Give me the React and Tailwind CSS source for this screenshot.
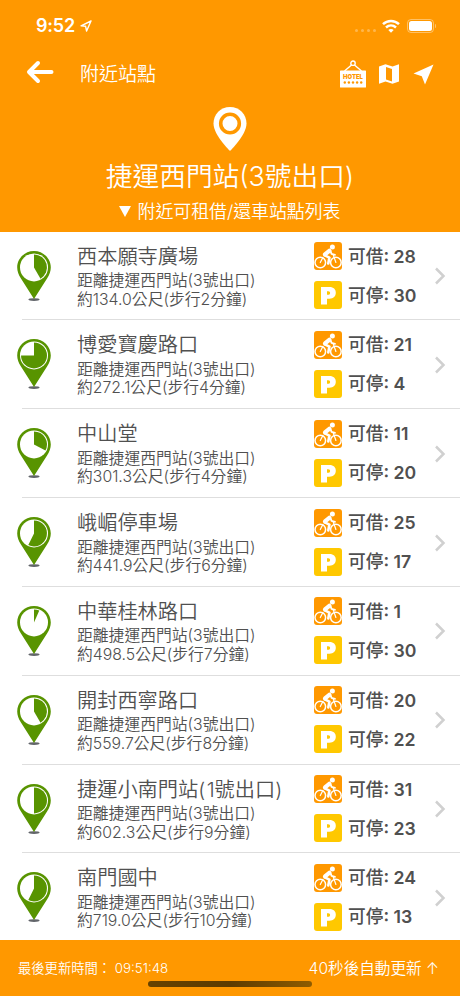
import React from "react";

const stations = [
  { name: "西本願寺廣場", distance: "134.0", minutes: 2, bikes: 28, docks: 30, angle: 150 },
  { name: "博愛寶慶路口", distance: "272.1", minutes: 4, bikes: 21, docks: 4, angle: 270 },
  { name: "中山堂", distance: "301.3", minutes: 4, bikes: 11, docks: 20, angle: 118 },
  { name: "峨嵋停車場", distance: "441.9", minutes: 6, bikes: 25, docks: 17, angle: 206 },
  { name: "中華桂林路口", distance: "498.5", minutes: 7, bikes: 1, docks: 30, angle: 24 },
  { name: "開封西寧路口", distance: "559.7", minutes: 8, bikes: 20, docks: 22, angle: 150 },
  { name: "捷運小南門站(1號出口)", distance: "602.3", minutes: 9, bikes: 31, docks: 23, angle: 180 },
  { name: "南門國中", distance: "719.0", minutes: 10, bikes: 24, docks: 13, angle: 206 },
];

// Pie slice that starts at 12 o'clock and runs clockwise
const slicePath = (angle, cx, cy, r) => {
  const rad = (angle * Math.PI) / 180;
  const x = cx + r * Math.sin(rad);
  const y = cy - r * Math.cos(rad);
  return `M${cx} ${cy}V${cy - r}A${r} ${r} 0 ${angle > 180 ? 1 : 0} 1 ${x} ${y}Z`;
};

function StationPin({ angle }) {
  return (
    <svg className="block h-[52px] w-[36px]" viewBox="0 0 36 52">
      <ellipse cx="18" cy="49.6" rx="5.6" ry="1.3" fill="#62656a" />
      <path
        d="M18 1C8.700 1 1.200 8.400 1.200 17.600C1.200 21.500 2.600 25 4.800 28.200L18 49L31.200 28.200C33.400 25 34.800 21.500 34.800 17.600C34.800 8.400 27.300 1 18 1Z"
        fill="#589400"
      />
      <circle cx="18" cy="17.400" r="14" fill="#fff" />
      <path d={slicePath(angle, 18, 17.4, 13)} fill="#589400" />
    </svg>
  );
}

function BikeIcon() {
  return (
    <svg className="block size-7" viewBox="0 0 28 28">
      <rect width="28" height="28" rx="3" fill="#ff9800" />
      <g fill="none" stroke="#fff" strokeWidth="1.500">
        <circle cx="6.300" cy="20.500" r="5.300" />
        <circle cx="21.900" cy="20.500" r="5.300" />
      </g>
      <circle cx="18.400" cy="4.900" r="2.500" fill="#fff" />
      <g fill="none" stroke="#fff" strokeLinecap="round" strokeLinejoin="round">
        <path d="M15.300 8.800L11 12.300" strokeWidth="4.200" />
        <path d="M16.300 8.500L17.500 11.800L21 12.800" strokeWidth="1.900" />
        <path d="M10.800 13.300L15.400 15.600L14.300 21.500" strokeWidth="2.600" />
        <path d="M6.300 20.500L9 15.300M19.300 13L21.900 20.500" strokeWidth="1.200" />
      </g>
    </svg>
  );
}

function ParkingIcon() {
  return (
    <div className="flex size-7 items-center justify-center rounded-[3px] bg-[#ffc800]">
      <svg className="size-7" viewBox="0 0 28 28">
        <path
          fill="#fff"
          fillRule="evenodd"
          d="M7 6H15.500C19.500 6 21.800 8.200 21.800 11.800C21.800 15.500 19.300 17.700 15.500 17.700H13V23.500H7ZM13 10.200V13.800H14.300C15.500 13.800 16.100 13.100 16.100 12C16.100 10.900 15.500 10.200 14.300 10.200Z"
        />
      </svg>
    </div>
  );
}

function StatusBar() {
  return (
    <div className="flex h-[50px] items-center justify-between pl-[36px] pr-[24px] pt-px">
      <div className="flex items-center gap-[5px]">
        <span className="text-[18px] font-semibold tracking-[-0.2px]">9:52</span>
        <svg className="size-3" viewBox="0 0 12 12" fill="none" stroke="currentColor" strokeWidth="1.400" strokeLinejoin="round">
          <path d="M11 1L1 5.800L5.600 6.300L6.600 11Z" />
        </svg>
      </div>
      <div className="flex items-center">
        <div className="mr-[6px] mt-[9px] flex gap-[3px]">
          {[0, 1, 2, 3].map((dot) => (
            <span key={dot} className="size-[3px] rounded-full bg-white/30" />
          ))}
        </div>
        <svg className="mr-[7px] h-[14px] w-[18px]" viewBox="0 0 18 14" fill="none" stroke="currentColor" strokeWidth="2.500">
          <path d="M1 5.200C5.500 0.900 12.500 0.900 17 5.200" />
          <path d="M4 8.500C7 5.800 11 5.800 14 8.500" />
          <path d="M9 13.700L6.300 11C7.800 9.700 10.200 9.700 11.700 11Z" fill="currentColor" stroke="none" />
        </svg>
        <div className="flex h-[14px] w-[27px] items-center rounded-[4px] border border-white/40 p-px">
          <div className="h-[10px] w-[23px] rounded-[2.5px] bg-white" />
        </div>
        <span className="ml-px h-1 w-[1.5px] rounded-r-full bg-white/40" />
      </div>
    </div>
  );
}

function HotelIcon() {
  return (
    <svg className="h-[28px] w-[26px]" viewBox="0 0 26 28">
      <g fill="none" stroke="#fff" strokeWidth="1.400">
        <circle cx="13" cy="3.200" r="2.200" />
        <path d="M11.500 5L4.500 11M14.500 5L21.500 11" />
      </g>
      <rect y="10.500" width="26" height="17" rx="0.600" fill="#fff" />
      <text x="13" y="18.900" textAnchor="middle" textLength="20" lengthAdjust="spacingAndGlyphs" fontSize="6.800" fontWeight="900" fill="#ff9800">
        HOTEL
      </text>
      <g fill="#ff9800">
        {[4.8, 8.9, 13, 17.1, 21.2].map((x) => (
          <circle key={x} cx={x} cy="22.500" r="1.200" />
        ))}
      </g>
    </svg>
  );
}

function Toolbar() {
  return (
    <div className="flex h-[48px] items-center pl-[26px] pr-[25px]">
      <svg className="-mt-[4px] h-[24px] w-[28px]" viewBox="0 0 28 24" fill="none" stroke="currentColor" strokeWidth="4" strokeLinecap="round" strokeLinejoin="round">
        <path d="M12 3L3 12L12 21M3.500 12H25.500" />
      </svg>
      <h1 className="ml-[26px] text-[19px] font-[350] leading-none">附近站點</h1>
      <div className="ml-auto flex items-center">
        <HotelIcon />
        <svg className="ml-[12px] h-[20px] w-[22px]" viewBox="0 0 22 20" fill="currentColor" fillRule="evenodd">
          <path d="M1 2.500L7.500 0.300L14.500 2.600L21 0.300V17.500L14.500 19.800L7.500 17.400L1 19.800ZM8 2.900V15.500L14 17.500V4.900Z" />
        </svg>
        <svg className="ml-[13px] mr-px size-[21px]" viewBox="0 0 21 21" fill="currentColor">
          <path d="M20.500 0.500L0.500 9.500L8.800 12.200L12 20.500Z" />
        </svg>
      </div>
    </div>
  );
}

function StationRow({ station, isLast }) {
  return (
    <li className="flex h-[88.85px] shrink-0">
      <div className="w-[22px] shrink-0">
        <div className="w-[36px] pl-[16px] pt-[18px]">
          <StationPin angle={station.angle} />
        </div>
      </div>
      <div className={`flex flex-1 ${isLast ? "" : "border-b border-[#dedede]"}`}>
        <div className="w-[292px] shrink-0 pl-[55px] pt-[12px] text-[#505050]">
          <h3 className="whitespace-nowrap text-[20.2px] font-[350] leading-[25px]">
            {station.name.split(/([()])/).map((part, index) => (
              <span key={index} className={part === "(" || part === ")" ? "tracking-[1.5px]" : ""}>
                {part}
              </span>
            ))}
          </h3>
          <p className="mt-[3.5px] whitespace-nowrap text-[15.8px] font-[350] leading-[18.5px]">
            距離捷運西門站(3號出口)
            <br />
            約{station.distance}公尺(步行{station.minutes}分鐘)
          </p>
        </div>
        <div className="flex flex-col gap-[11px] pt-[10.5px] text-[17.7px] text-[#505050]">
          <div className="flex h-7 items-center gap-[6px]">
            <BikeIcon />
            <span className="mt-px whitespace-nowrap font-semibold leading-7">
              <span className="font-medium">可借</span>: {station.bikes}
            </span>
          </div>
          <div className="flex h-7 items-center gap-[6px]">
            <ParkingIcon />
            <span className="mt-px whitespace-nowrap font-semibold leading-7">
              <span className="font-medium">可停</span>: {station.docks}
            </span>
          </div>
        </div>
        <svg className="ml-auto mr-[14px] mt-[35.5px] h-[18px] w-[12px]" viewBox="0 0 12 18" fill="none" stroke="#d0d0d0" strokeWidth="2.500">
          <path d="M2 1.500L9.500 9L2 16.500" />
        </svg>
      </div>
    </li>
  );
}

export default function App() {
  return (
    <div className="flex h-[996px] w-[460px] flex-col overflow-hidden bg-white font-['Inter','Noto_Sans_CJK_TC',sans-serif]">
      <header className="h-[231.5px] shrink-0 bg-[#ff9800] text-white">
        <StatusBar />
        <Toolbar />
        <div className="flex flex-col items-center pt-[9px]">
          <svg className="h-[44px] w-[34px]" viewBox="0 0 34 44">
            <path d="M17 0C7.600 0 0.500 7.300 0.500 16.500C0.500 28 17 44 17 44S33.500 28 33.500 16.500C33.500 7.300 26.400 0 17 0Z" fill="#fff" />
            <circle cx="17" cy="16.500" r="9.300" fill="none" stroke="#ff9800" strokeWidth="3.600" />
          </svg>
          <h2 className="mt-[7px] text-[26.7px] font-[350] leading-[36px]">捷運西門站(3號出口)</h2>
          <div className="mt-[6px] flex items-center gap-[6px] text-[17.9px] font-[350] leading-[24px]">
            <svg className="-mt-px h-[11px] w-[12px]" viewBox="0 0 11 11" fill="currentColor" preserveAspectRatio="none">
              <path d="M0 0H11L5.500 11Z" />
            </svg>
            附近可租借/還車站點列表
          </div>
        </div>
      </header>

      <ul className="flex min-h-0 flex-1 flex-col overflow-hidden">
        {stations.map((station, index) => (
          <StationRow key={station.name} station={station} isLast={index === stations.length - 1} />
        ))}
      </ul>

      <footer className="flex h-[56px] shrink-0 flex-col bg-[#ff9800] text-white">
        <div className="flex h-[41px] items-end justify-between pl-[18px] pr-[21px]">
          <span className="text-[13.3px] font-[350] leading-[25px]">最後更新時間： 09:51:48</span>
          <span className="text-[15.6px] font-[350] leading-[25px]">40秒後自動更新 ↑</span>
        </div>
        <div className="mx-auto h-[6px] w-[164px] rounded-full bg-linear-to-r from-[#664200] via-[#5d3b00] to-[#8f5c00]" />
      </footer>
    </div>
  );
}
